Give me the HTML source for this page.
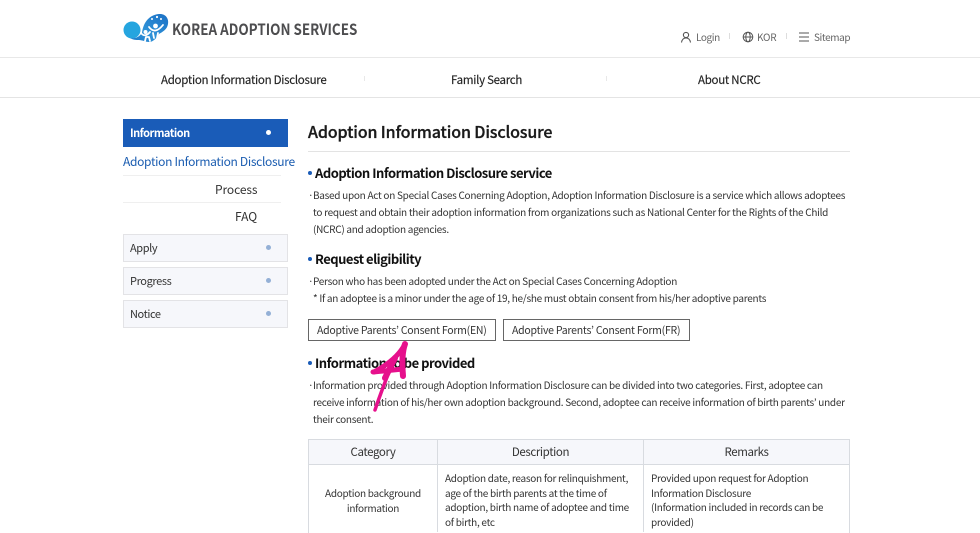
<!DOCTYPE html>
<html lang="en"><head><meta charset="utf-8"><title>Adoption Information Disclosure</title>
<style>
html,body{margin:0;padding:0;background:#fff}
body{position:relative;width:980px;height:532px;overflow:hidden;font-family:"Noto Sans CJK KR","Noto Sans CJK JP","Liberation Sans",sans-serif;color:#222}
.t{position:absolute;white-space:nowrap;line-height:18px}
.r{position:absolute}
.p{font-size:10px;color:#333;letter-spacing:-.28px}
.h{font-size:13px;font-weight:700;color:#111;letter-spacing:-.5px}
.dot{position:absolute;border-radius:50%}
.nav{font-size:11.5px;color:#222;letter-spacing:-.28px;-webkit-text-stroke:.15px #222}
.top{font-size:10px;color:#666;letter-spacing:-.4px}
.side{font-size:11px;color:#333;letter-spacing:-.4px}
.th{font-size:11.5px;color:#333;text-align:center;letter-spacing:-.4px}
.td{font-size:10px;color:#333;letter-spacing:-.28px}
.b{font-size:10.5px;color:#333;letter-spacing:-.24px}
</style></head><body>

<!-- logo -->
<svg class="r" style="left:122px;top:12px" width="50" height="34" viewBox="0 0 50 34">
<defs><linearGradient id="g" x1="1" y1="0" x2="0" y2="1"><stop offset="0" stop-color="#1b6fc4"/><stop offset=".6" stop-color="#2f93d8"/><stop offset="1" stop-color="#1b78c9"/></linearGradient></defs>
<circle cx="10" cy="18" r="8.500" fill="#25a5df"/>
<path d="M8 26C13 27 17 25 20 21C21 12 26 3 37 2C44 1.500 47 7 46 12C45 18 40 20 37 22C35 26 31 30 27 30C24 30 20 28 17 28C14 28 11 28 8 26Z" fill="url(#g)"/>
<g fill="none" stroke="#fff" stroke-width="1.800" stroke-linecap="round" stroke-linejoin="round"><path d="M19 21Q23 26 28 20"/><path d="M23 29L24 25L27 25L28 29"/><path d="M27 15Q33 23 41 13"/><path d="M31 21L32 26M36 21L35 26"/></g>
<circle cx="23.500" cy="20" r="2" fill="#fff"/><circle cx="33.500" cy="14" r="2.400" fill="#fff"/><circle cx="30" cy="7" r="1" fill="#fff"/><circle cx="35" cy="5" r="1.100" fill="#fff"/><circle cx="39" cy="7" r="1" fill="#fff"/>
</svg>
<div class="t" style="left:172px;top:19px;font-size:15.500px;font-weight:700;color:#4d4d4f;line-height:20px;transform:scaleX(.865);transform-origin:left center">KOREA ADOPTION SERVICES</div>

<!-- top links -->
<svg class="r" style="left:680px;top:31px" width="12" height="12" viewBox="0 0 12 12" fill="none" stroke="#555" stroke-width="1.100"><circle cx="6" cy="4" r="2.600"/><path d="M1.500 11.500C2 8.500 3.500 7 6 7S10 8.500 10.500 11.500"/></svg>
<div class="t top" style="left:696px;top:27.500px">Login</div>
<div class="r" style="left:729px;top:33px;width:1px;height:6px;background:#ddd"></div>
<svg class="r" style="left:742px;top:31px" width="12" height="12" viewBox="0 0 12 12" fill="none" stroke="#555" stroke-width="1"><circle cx="6" cy="6" r="4.800"/><ellipse cx="6" cy="6" rx="2.200" ry="4.800"/><path d="M1.200 6H10.800"/></svg>
<div class="t top" style="left:757px;top:27.500px;letter-spacing:-.2px">KOR</div>
<div class="r" style="left:786px;top:33px;width:1px;height:6px;background:#ddd"></div>
<svg class="r" style="left:799px;top:32px" width="10" height="10" viewBox="0 0 10 10" stroke="#555" stroke-width="1.100"><path d="M0 1H10M0 5H10M0 9H10"/></svg>
<div class="t top" style="left:814px;top:27.500px">Sitemap</div>

<!-- nav -->
<div class="r" style="left:0;top:57px;width:980px;height:1px;background:#e8e8e8"></div>
<div class="r" style="left:0;top:97px;width:980px;height:1px;background:#e4e4e4"></div>
<div class="t nav" style="left:161px;top:71px">Adoption Information Disclosure</div>
<div class="r" style="left:364px;top:76px;width:1px;height:5px;background:#e8e8e8"></div>
<div class="t nav" style="left:451px;top:71px">Family Search</div>
<div class="r" style="left:606px;top:76px;width:1px;height:5px;background:#e8e8e8"></div>
<div class="t nav" style="left:698px;top:71px">About NCRC</div>

<!-- sidebar -->
<div class="r" style="left:123px;top:119px;width:165px;height:28px;background:#1a5cb8"></div>
<div class="t" style="left:130px;top:124px;font-size:11px;font-weight:700;color:#fff;letter-spacing:-.5px">Information</div>
<div class="dot" style="left:266px;top:130px;width:5px;height:5px;background:#fff"></div>
<div class="t" style="left:123px;top:153px;font-size:12px;color:#1a5cb0;letter-spacing:-.32px">Adoption Information Disclosure</div>
<div class="r" style="left:123px;top:175px;width:158px;height:1px;background:#efefef"></div>
<div class="t" style="left:215px;top:181px;font-size:12px;color:#333;letter-spacing:-.1px">Process</div>
<div class="r" style="left:123px;top:202px;width:158px;height:1px;background:#efefef"></div>
<div class="t" style="left:235px;top:208px;font-size:12px;color:#333">FAQ</div>
<div class="r" style="left:123px;top:234px;width:163px;height:26px;background:#f6f7fb;border:1px solid #e3e3e6"></div>
<div class="t side" style="left:130px;top:239px">Apply</div>
<div class="dot" style="left:266px;top:245px;width:5px;height:5px;background:#94b0d6"></div>
<div class="r" style="left:123px;top:267px;width:163px;height:26px;background:#f6f7fb;border:1px solid #e3e3e6"></div>
<div class="t side" style="left:130px;top:272px">Progress</div>
<div class="dot" style="left:266px;top:278px;width:5px;height:5px;background:#94b0d6"></div>
<div class="r" style="left:123px;top:300px;width:163px;height:26px;background:#f6f7fb;border:1px solid #e3e3e6"></div>
<div class="t side" style="left:130px;top:305px">Notice</div>
<div class="dot" style="left:266px;top:311px;width:5px;height:5px;background:#94b0d6"></div>

<!-- content -->
<div class="t" style="left:308px;top:121px;font-size:16px;font-weight:500;color:#1a1a1a;line-height:20px;letter-spacing:-.13px;-webkit-text-stroke:.3px #1a1a1a">Adoption Information Disclosure</div>
<div class="r" style="left:308px;top:151px;width:542px;height:1px;background:#e3e3e3"></div>

<div class="dot" style="left:308px;top:171px;width:4px;height:4px;background:#1a5cb8"></div>
<div class="t h" style="left:315px;top:164px">Adoption Information Disclosure service</div>
<div class="t p" style="left:308px;top:186px">·</div>
<div class="t p" style="left:313px;top:186px">Based upon Act on Special Cases Conerning Adoption, Adoption Information Disclosure is a service which allows adoptees</div>
<div class="t p" style="left:313px;top:203px">to request and obtain their adoption information from organizations such as National Center for the Rights of the Child</div>
<div class="t p" style="left:313px;top:220px">(NCRC) and adoption agencies.</div>

<div class="dot" style="left:308px;top:257px;width:4px;height:4px;background:#1a5cb8"></div>
<div class="t h" style="left:315px;top:250px">Request eligibility</div>
<div class="t p" style="left:308px;top:272px">·</div>
<div class="t p" style="left:313px;top:272px">Person who has been adopted under the Act on Special Cases Concerning Adoption</div>
<div class="t p" style="left:313px;top:289px">* If an adoptee is a minor under the age of 19, he/she must obtain consent from his/her adoptive parents</div>

<div class="r" style="left:308px;top:319px;width:186px;height:20px;border:1px solid #666"></div>
<div class="t b" style="left:317px;top:322px">Adoptive Parents’ Consent Form(EN)</div>
<div class="r" style="left:503px;top:319px;width:185px;height:20px;border:1px solid #666"></div>
<div class="t b" style="left:512px;top:322px">Adoptive Parents’ Consent Form(FR)</div>

<div class="dot" style="left:308px;top:361px;width:4px;height:4px;background:#1a5cb8"></div>
<div class="t h" style="left:315px;top:354px">Information to be provided</div>
<div class="t p" style="left:308px;top:376px">·</div>
<div class="t p" style="left:313px;top:376px">Information provided through Adoption Information Disclosure can be divided into two categories. First, adoptee can</div>
<div class="t p" style="left:313px;top:393px">receive information of his/her own adoption background. Second, adoptee can receive information of birth parents’ under</div>
<div class="t p" style="left:313px;top:410px">their consent.</div>

<!-- table -->
<div class="r" style="left:308px;top:439px;width:540px;height:93px;border:1px solid #d8dbe0;border-bottom:0"></div>
<div class="r" style="left:309px;top:440px;width:540px;height:24px;background:#f6f7fb;border-bottom:1px solid #d8dbe0"></div>
<div class="r" style="left:437px;top:440px;width:1px;height:92px;background:#d8dbe0"></div>
<div class="r" style="left:643px;top:440px;width:1px;height:92px;background:#d8dbe0"></div>
<div class="t th" style="left:309px;top:443px;width:128px">Category</div>
<div class="t th" style="left:438px;top:443px;width:205px">Description</div>
<div class="t th" style="left:644px;top:443px;width:205px">Remarks</div>
<div class="t td" style="left:309px;top:485px;width:128px;text-align:center;line-height:15px;white-space:normal">Adoption background<br>information</div>
<div class="t td" style="left:445px;top:471px;line-height:14.600px">Adoption date, reason for relinquishment,<br>age of the birth parents at the time of<br>adoption, birth name of adoptee and time<br>of birth, etc</div>
<div class="t td" style="left:651px;top:471px;line-height:14.600px">Provided upon request for Adoption<br>Information Disclosure<br>(Information included in records can be<br>provided)</div>

<!-- arrow annotation -->
<svg class="r" style="left:365px;top:340px" width="50" height="75" viewBox="0 0 50 75" fill="none" stroke="#e6108c" stroke-linecap="round" stroke-linejoin="round">
<path d="M40 4C35 14 24 24 9 32" stroke-width="5"/>
<path d="M40 4C37 12 37 24 38 36" stroke-width="6"/>
<path d="M8 32C18 31 28 30 38 29" stroke-width="5"/>
<path d="M30 18L20 38" stroke-width="6"/>
<path d="M26 27C20 42 16 52 10 70" stroke-width="3.500"/>
</svg>
</body></html>
